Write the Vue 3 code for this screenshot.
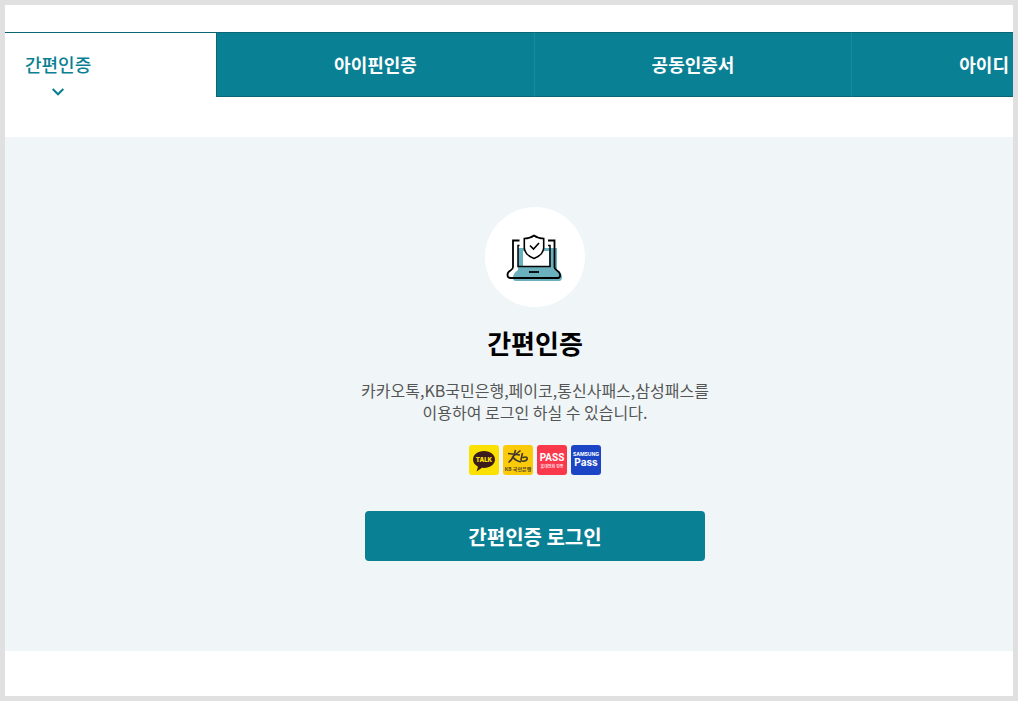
<script setup>
import { ref } from 'vue'

const tabs = [
  { id: 'simple', label: '간편인증' },
  { id: 'ipin', label: '아이핀인증' },
  { id: 'cert', label: '공동인증서' },
  { id: 'userid', label: '아이디' }
]
const current = ref('simple')
</script>

<template>
  <div class="frame">
    <nav class="tabs">
      <button
        v-for="tab in tabs"
        :key="tab.id"
        type="button"
        class="tab"
        :class="[tab.id, { active: current === tab.id }]"
        @click="current = tab.id"
      >
        <span class="tab-label">
          {{ tab.label }}
          <svg v-if="current === tab.id" class="chevron" viewBox="0 0 12 8" aria-hidden="true">
            <path d="M0.700 1 L6 6.300 L11.300 1" fill="none" stroke="#0a8094" stroke-width="2" />
          </svg>
        </span>
      </button>
    </nav>

    <main class="panel">
      <div class="circle">
        <svg width="100" height="100" viewBox="0 0 100 100" aria-hidden="true">
          <path d="M33 41 H72 V63 Q77 66 77 70 Q77 74 74 74 H31 Q28 74 28 71 Q28 66 33 63 Z" fill="#6bb1bd" />
          <path d="M38 44 H64 V59 H38 Z" fill="#fff" />
          <g fill="none" stroke="#000" stroke-width="1.800">
            <path d="M34.500 33.500 H28 V60 Q28 62 25.500 63.500 Q22.500 65 22.500 68 Q22.500 71 25.500 71 H72.500 Q75.500 71 75 67.500 Q74.500 65 72 63.500 Q69.500 62 69.500 60 V33.500 H63" />
            <path d="M34.500 38.500 H33 V59.500 H65 V38.500 H63" stroke-width="1.500" />
            <path d="M49 28.500 Q53 31.500 58.700 31.500 V41 Q58 48 49 51.500 Q40 48 39.300 41 V31.500 Q45 31.500 49 28.500 Z" fill="#fff" stroke-width="1.600" />
            <path d="M45 38.500 L48.500 42 L54 36" stroke-width="1.600" />
            <path d="M44 65 H54" />
          </g>
        </svg>
      </div>

      <h1>간편인증</h1>
      <p>카카오톡,KB국민은행,페이코,통신사패스,삼성패스를<br />이용하여 로그인 하실 수 있습니다.</p>

      <div class="logos">
        <svg viewBox="0 0 30 30">
          <rect width="30" height="30" rx="3" fill="#fae100" />
          <path d="M15 6 C8.500 6 4 10 4 14.500 C4 17.500 6 20.200 9 21.700 L7.500 26.500 L13 22.800 C20.500 23.500 26 19.500 26 14.500 C26 10 21.500 6 15 6 Z" fill="#3b1c1c" />
          <text x="15" y="17" font-size="6" font-weight="900" fill="#fae100">TALK</text>
        </svg>
        <svg viewBox="0 0 30 30">
          <rect width="30" height="30" rx="3" fill="#fbcb09" />
          <g fill="none" stroke="#40372a" stroke-width="1.600">
            <path d="M5 8.500 L17 10 M12.500 5 Q11 13 5.500 17.500 M17.500 5.500 L9.500 12 Q13 16 18 17" />
            <path d="M19.500 8 L18 14.500 Q18 16.500 20.500 16.200 Q24.500 15.500 24.200 13 Q23.500 11 19.500 12.800" />
          </g>
          <text x="15" y="26" font-size="5" font-weight="700" fill="#51452b">KB 국민은행</text>
        </svg>
        <svg viewBox="0 0 30 30">
          <rect width="30" height="30" rx="3" fill="#fa384b" />
          <text class="pass" x="15" y="16" font-size="10" font-weight="700" fill="#fff">PASS</text>
          <text x="15" y="23" font-size="4" font-weight="700" fill="#ffdfe2">휴대전화 인증</text>
        </svg>
        <svg viewBox="0 0 30 30">
          <rect width="30" height="30" rx="3" fill="#1c45c6" />
          <text x="15" y="11" font-size="5" font-weight="700" fill="#fff">SAMSUNG</text>
          <text x="15" y="21" font-size="10" font-weight="700" fill="#fff">Pass</text>
        </svg>
      </div>

      <button type="button" class="login">간편인증 로그인</button>
    </main>
  </div>
</template>

<style>
body {
  margin: 0;
}
</style>

<style scoped>
.frame {
  box-sizing: border-box;
  min-height: 100vh;
  padding-top: 27px;
  border: 5px solid #e0e0e0;
  background: #fff;
  font-family: "Noto Sans CJK KR", "Noto Sans", sans-serif;
}
button {
  margin: 0;
  border: 0;
  font-family: inherit;
  cursor: pointer;
}
.tabs {
  display: grid;
  grid-template-columns: 211fr 318fr 317fr 162fr;
}
.tab {
  display: flex;
  align-items: flex-start;
  justify-content: center;
  height: 65px;
  padding: 18px 0 0;
  border-top: 1px solid #0a6675;
  border-bottom: 1px solid #0a6675;
  border-left: 1px solid #158da0;
  background: #0a8094;
  color: #fff;
  font-size: 18px;
  font-weight: 700;
  line-height: 26px;
}
.tab.ipin {
  border-left-color: #0a6675;
}
.tab.active {
  border-bottom-color: #fff;
  border-left: 0;
  background: #fff;
  color: #0a8094;
  font-weight: 500;
}
.tab.simple {
  justify-content: flex-start;
  padding-left: 20px;
}
.tab.userid {
  justify-content: flex-end;
  padding-right: 4px;
}
.tab-label {
  display: flex;
  flex-direction: column;
  align-items: center;
  gap: 11px;
}
.chevron {
  width: 12px;
  height: 8px;
}
.panel {
  display: flex;
  flex-direction: column;
  align-items: center;
  margin-top: 40px;
  padding: 70px 0 90px 52px;
  background: #f0f5f8;
}
.circle {
  width: 100px;
  height: 100px;
  border-radius: 50%;
  background: #fff;
}
h1 {
  margin: 16px 0;
  color: #000;
  font-size: 26px;
  font-weight: 700;
  line-height: 40px;
}
p {
  margin: 0;
  color: #555;
  font-size: 16px;
  line-height: 22px;
  text-align: center;
}
.logos {
  display: flex;
  gap: 4px;
  margin: 22px 0 36px;
}
.logos svg {
  width: 30px;
  height: 30px;
}
.logos text {
  font-family: Inter, "Noto Sans CJK KR", sans-serif;
  text-anchor: middle;
}
.logos .pass {
  font-family: Roboto, sans-serif;
}
.login {
  width: 340px;
  height: 50px;
  border-radius: 4px;
  background: #0a8094;
  color: #fff;
  font-size: 20px;
  font-weight: 700;
}
</style>
